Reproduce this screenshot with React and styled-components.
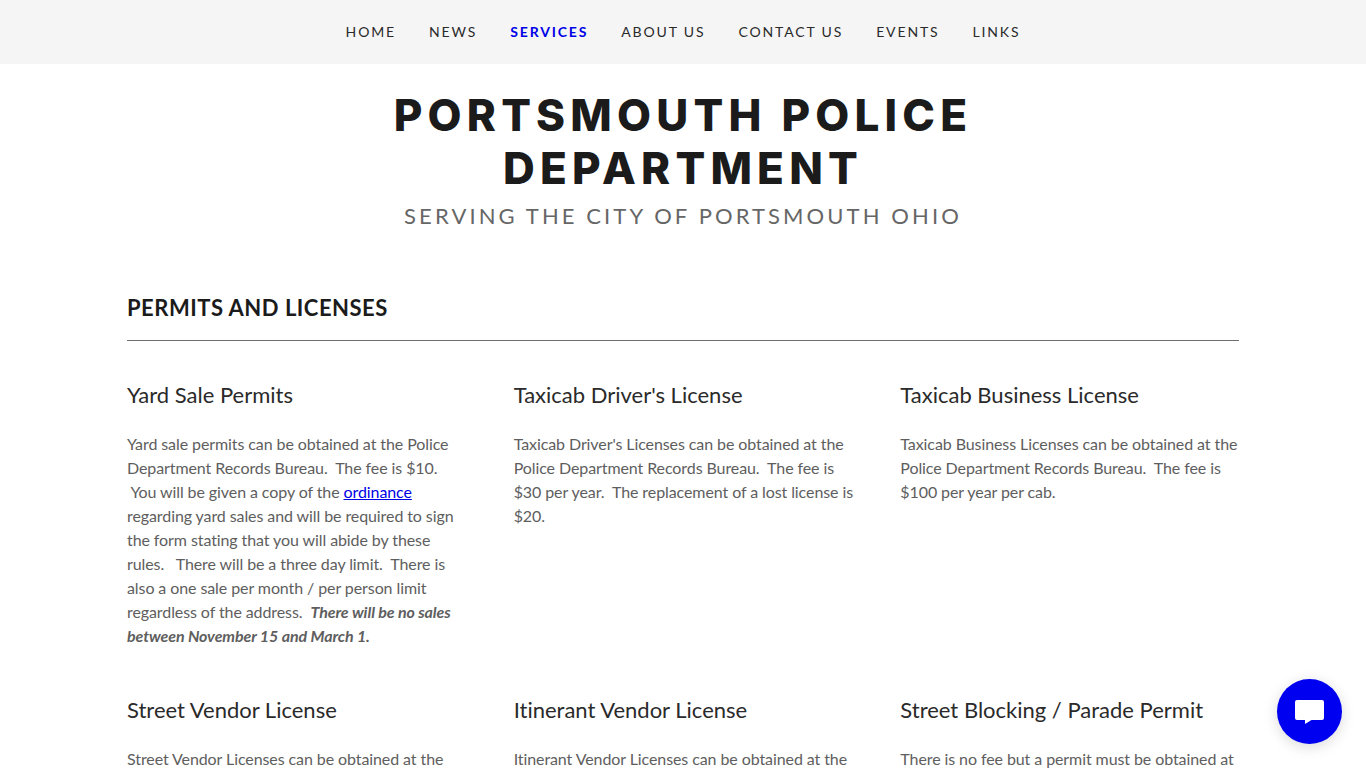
import React from "react";
import styled, { createGlobalStyle } from "styled-components";

const GlobalStyle = createGlobalStyle`
  html, body {
    margin: 0;
    padding: 0;
    background: #fff;
    overflow: hidden;
  }
  body {
    font-family: "Lato", "Liberation Sans", sans-serif;
    font-variant-ligatures: none;
  }
`;

const Page = styled.div`
  height: 768px;
  overflow: hidden;
`;

const Nav = styled.nav`
  height: 62px;
  padding-bottom: 2px;
  background: #f5f5f5;
  display: flex;
  justify-content: center;
  align-items: center;
  gap: 33px;
`;

const NavLink = styled.a`
  font-size: 14px;
  letter-spacing: 1.85px;
  color: ${({ $active }) => ($active ? "#0000e6" : "#2a2a2a")};
  font-weight: ${({ $active }) => ($active ? 700 : 400)};
  text-transform: uppercase;
`;

const Header = styled.header`
  display: flex;
  flex-direction: column;
  align-items: center;
  padding-top: 25px;
`;

const Title = styled.h1`
  margin: 0;
  width: 700px;
  text-align: center;
  font-family: "Inter", "Lato", sans-serif;
  font-size: 44px;
  line-height: 53px;
  font-weight: 800;
  letter-spacing: 5.2px;
  color: #1b1b1b;
`;

const Tagline = styled.div`
  margin-top: 6px;
  font-size: 22px;
  line-height: 29px;
  letter-spacing: 3.1px;
  color: #666;
`;

const Main = styled.main`
  width: 1112px;
  margin: 64px auto 0;
`;

const SectionHead = styled.h2`
  margin: 0;
  padding-bottom: 18px;
  border-bottom: 1px solid #6e6e6e;
  font-size: 22px;
  line-height: 28px;
  font-weight: 700;
  letter-spacing: 0.5px;
  color: #1b1b1b;
`;

const Grid = styled.div`
  display: grid;
  grid-template-columns: repeat(3, 1fr);
  column-gap: 48px;
  row-gap: 47px;
  margin-top: 39px;
`;

const CardTitle = styled.h4`
  margin: 0 0 23px;
  font-size: 22px;
  line-height: 29px;
  font-weight: 400;
  color: #2a2a2a;
`;

const Body = styled.p`
  margin: 0 -2px 0 0;
  font-size: 16px;
  line-height: 24px;
  letter-spacing: -0.09px;
  color: #5e5e5e;
`;

const Link = styled.a`
  color: #0000e6;
  text-decoration: underline;
`;

const Strong = styled.strong`
  font-style: italic;
  font-weight: 700;
`;

const ChatButton = styled.button`
  position: fixed;
  left: 1277px;
  top: 679px;
  width: 65px;
  height: 65px;
  padding: 0;
  border: none;
  border-radius: 50%;
  background: #0000f0;
  box-shadow: 0 3px 14px rgba(0, 0, 0, 0.15);
  display: flex;
  align-items: center;
  justify-content: center;
`;

const cards = [
  {
    title: "Yard Sale Permits",
    body: (
      <>
        Yard sale permits can be obtained at the Police Department Records Bureau.&nbsp; The fee is $10.&nbsp;
        &nbsp;You will be given a copy of the <Link>ordinance</Link> regarding yard sales and will be required to
        sign the form stating that you will abide by these rules. &nbsp; There will be a three day limit.&nbsp; There
        is also a one sale per month / per person limit regardless of the address.&nbsp;{" "}
        <Strong>There will be no sales between November 15 and March 1.</Strong>
      </>
    ),
  },
  {
    title: "Taxicab Driver's License",
    body: "Taxicab Driver's Licenses can be obtained at the Police Department Records Bureau.\u00a0 The fee is $30 per year.\u00a0 The replacement of a lost license is $20.",
  },
  {
    title: "Taxicab Business License",
    body: "Taxicab Business Licenses can be obtained at the Police Department Records Bureau.\u00a0 The fee is $100 per year per cab.",
  },
  { title: "Street Vendor License", body: "Street Vendor Licenses can be obtained at the" },
  { title: "Itinerant Vendor License", body: "Itinerant Vendor Licenses can be obtained at the" },
  { title: "Street Blocking / Parade Permit", body: "There is no fee but a permit must be obtained at" },
];

const links = ["Home", "News", "Services", "About Us", "Contact Us", "Events", "Links"];

const App = () => {
  return (
    <Page>
      <GlobalStyle />
      <Nav>
        {links.map((link) => (
          <NavLink key={link} $active={link === "Services"}>
            {link}
          </NavLink>
        ))}
      </Nav>
      <Header>
        <Title>PORTSMOUTH POLICE DEPARTMENT</Title>
        <Tagline>SERVING THE CITY OF PORTSMOUTH OHIO</Tagline>
      </Header>
      <Main>
        <SectionHead>PERMITS AND LICENSES</SectionHead>
        <Grid>
          {cards.map((card) => (
            <div key={card.title}>
              <CardTitle>{card.title}</CardTitle>
              <Body>{card.body}</Body>
            </div>
          ))}
        </Grid>
      </Main>
      <ChatButton aria-label="Chat">
        <svg width="29" height="24" viewBox="0 0 29 24">
          <path
            d="M2 0h25a2 2 0 0 1 2 2v16a2 2 0 0 1-2 2H16.500L10 24v-4H2a2 2 0 0 1-2-2V2a2 2 0 0 1 2-2z"
            fill="#fff"
          />
        </svg>
      </ChatButton>
    </Page>
  );
};

export default App;
